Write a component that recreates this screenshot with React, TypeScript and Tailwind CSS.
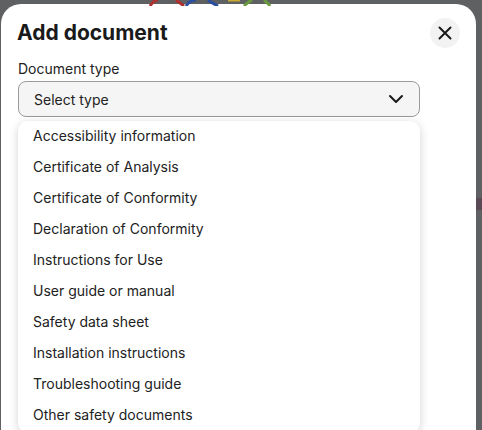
import React from "react";

const items = [
  "Accessibility information",
  "Certificate of Analysis",
  "Certificate of Conformity",
  "Declaration of Conformity",
  "Instructions for Use",
  "User guide or manual",
  "Safety data sheet",
  "Installation instructions",
  "Troubleshooting guide",
  "Other safety documents",
];

export default function App() {
  return (
    <div
      className="relative w-[482px] h-[430px] overflow-hidden bg-[#5e6062]"
      style={{ fontFamily: "Inter, 'Noto Sans', sans-serif" }}
    >
      <svg className="absolute left-[140px] top-0" width="140" height="6" viewBox="0 0 140 6">
        <path d="M10 6 Q14 0 18 0" stroke="#b03030" strokeWidth="3" fill="none" />
        <path d="M36 0 Q40 3 44 6" stroke="#b03030" strokeWidth="3" fill="none" />
        <path d="M46 6 Q50 0 56 0" stroke="#2a4ea0" strokeWidth="3" fill="none" />
        <path d="M68 0 Q72 3 78 6" stroke="#2a4ea0" strokeWidth="3" fill="none" />
        <path d="M88 0 L100 0" stroke="#c8a830" strokeWidth="3" fill="none" />
        <path d="M104 6 Q108 2 112 0" stroke="#6a9a40" strokeWidth="3" fill="none" />
        <path d="M124 0 Q128 3 130 6" stroke="#6a9a40" strokeWidth="3" fill="none" />
      </svg>
      <div className="absolute right-0 top-[198px] w-[6px] h-[12px] bg-[#5a4a55]" />
      <div className="ml-[1px] mt-[4px] w-[475px] h-[460px] rounded-t-[20px] bg-white px-[17px]">
        <div className="flex items-center justify-between pt-[14px]">
          <h1 className="text-[21px] leading-[28px] font-bold text-[#1a1a1a] ml-[-1px]">Add document</h1>
          <button className="w-[30px] h-[30px] rounded-full bg-[#f2f2f2] flex items-center justify-center mr-[-1px]">
            <svg width="14" height="14" viewBox="0 0 14 14">
              <path d="M1.5 1.5 L12.5 12.5 M12.5 1.5 L1.5 12.5" stroke="#1a1a1a" strokeWidth="2" strokeLinecap="round" />
            </svg>
          </button>
        </div>
        <div className="mt-[11px] text-[14px] leading-[20px] text-[#222]">Document type</div>
        <div className="mt-[2px] w-[402px] h-[36px] rounded-[8px] border border-[#9a9a9a] bg-[#f5f5f5] flex items-center justify-between pl-[15px] pr-[15px]">
          <span className="text-[14px] text-[#222]">Select type</span>
          <svg width="16" height="10" viewBox="0 0 16 10">
            <path d="M2 2 L8 8 L14 2" stroke="#1a1a1a" strokeWidth="2" fill="none" strokeLinecap="round" strokeLinejoin="round" />
          </svg>
        </div>
        <div className="mt-[4px] w-[402px] rounded-[10px] bg-white shadow-[0_2px_10px_rgba(0,0,0,0.18)] pb-[2px]">
          {items.map((t) => (
            <div key={t} className="h-[31px] pb-[3px] flex items-center pl-[15px] text-[14px] text-[#222]">
              {t}
            </div>
          ))}
        </div>
      </div>
    </div>
  );
}
